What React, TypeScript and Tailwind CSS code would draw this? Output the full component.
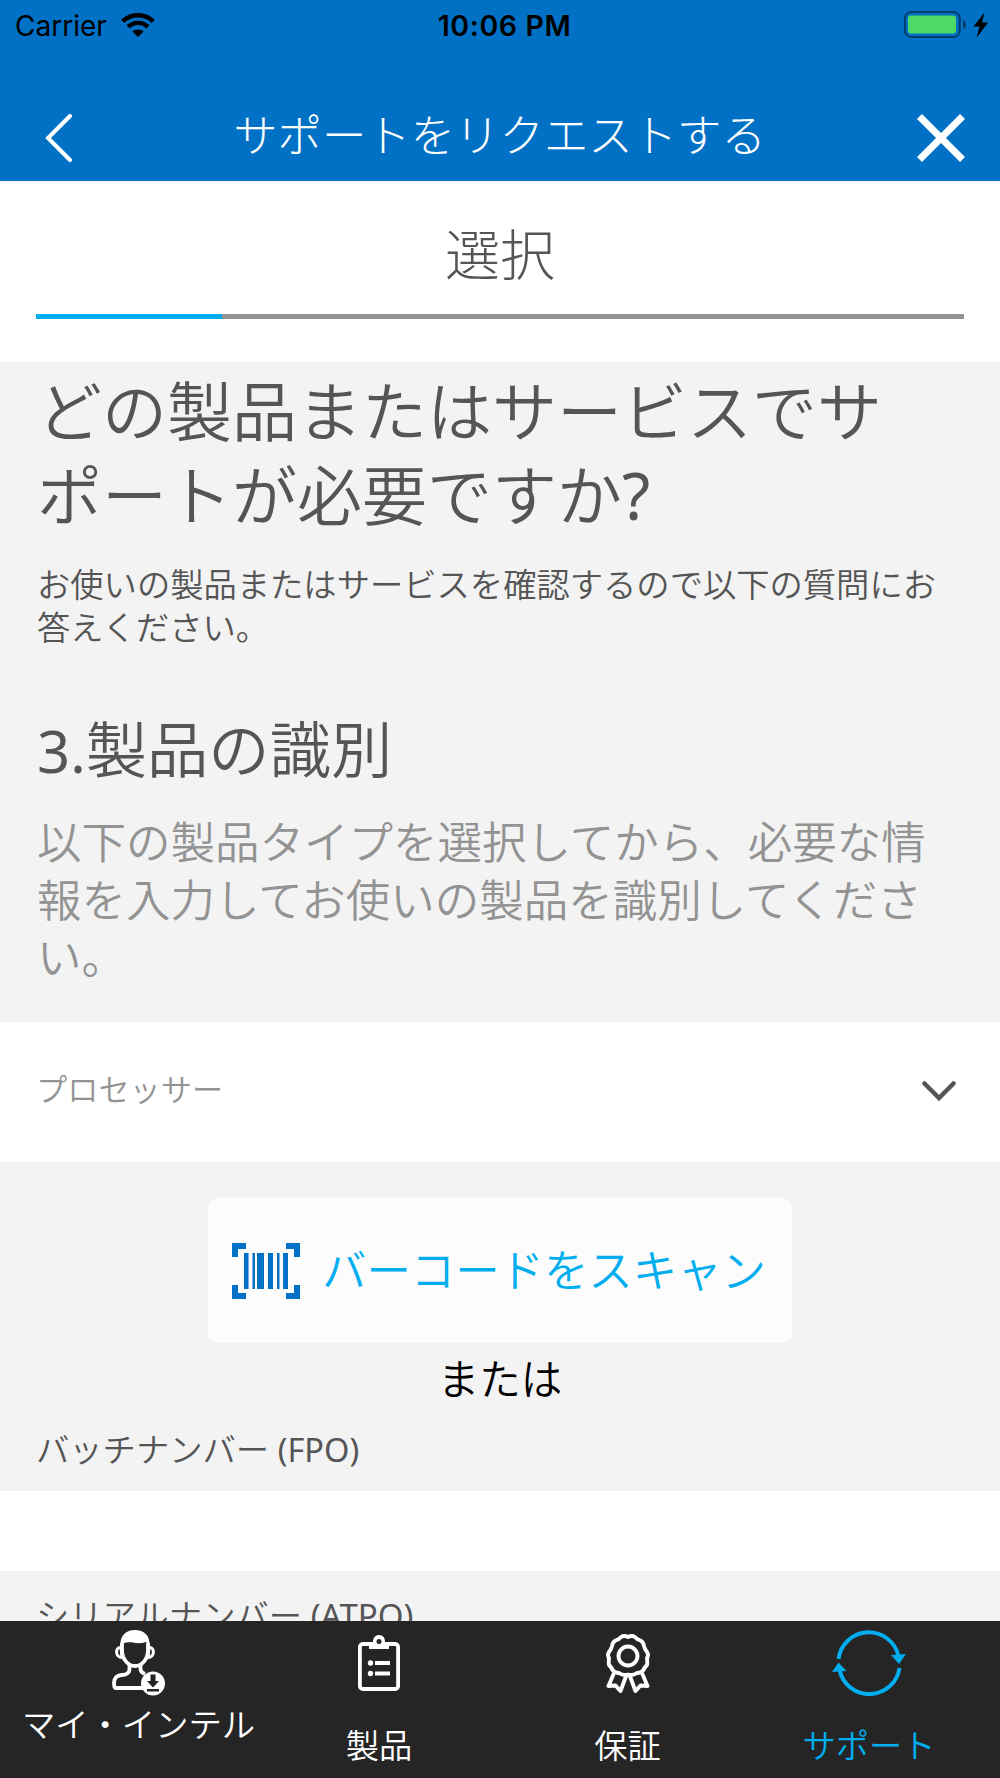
import type { ReactNode } from "react";

function WifiIcon() {
    return (
        <svg className="w-[34px] h-[24px] mb-[2px]" viewBox="0 0 34 24" fill="#000">
            <path d="M17 0C23.600 0 29.500 2.500 33.800 6.700L30.700 9.900C27.100 6.500 22.300 4.500 17 4.500S6.900 6.500 3.300 9.900L0.200 6.700C4.500 2.500 10.400 0 17 0Z" />
            <path d="M17 7.700C21.500 7.700 25.500 9.400 28.400 12.300L25.300 15.400C23.100 13.300 20.200 12.100 17 12.100S10.900 13.300 8.700 15.400L5.600 12.300C8.500 9.400 12.500 7.700 17 7.700Z" />
            <path d="M17 16.500C19.300 16.500 21.400 17.200 22.600 18.500L17 24L11.400 18.500C12.600 17.200 14.700 16.500 17 16.500Z" />
        </svg>
    );
}

function BatteryIcon() {
    return (
        <svg className="w-[86px] h-[28px] mb-[2px]" viewBox="0 0 86 28">
            <rect x="0.800" y="1" width="55" height="25" rx="6.500" fill="none" stroke="#000" strokeOpacity="0.450" strokeWidth="2" />
            <rect x="4" y="4.500" width="48" height="18" rx="3" fill="#4cd964" />
            <path d="M59 8.500C63 10.500 63 16.500 59 18.500Z" fill="#000" fillOpacity="0.450" />
            <path d="M80.500 1.500L69.500 15.500H75.500L72.500 27L84 11.500H78Z" fill="#000" />
        </svg>
    );
}

function BarcodeIcon() {
    return (
        <svg className="w-[68px] h-[56px]" viewBox="0 0 68 56" fill="#0071c5">
            <path d="M0 0H14V6H6V14H0ZM54 0H68V14H62V6H54ZM0 42H6V50H14V56H0ZM62 42H68V56H54V50H62Z" />
            <path d="M12 10H16.500V46H12ZM20.500 10H23V46H20.500ZM25 10H32V46H25ZM36 10H41V46H36ZM45 10H47.500V46H45ZM51 10H56V46H51Z" />
        </svg>
    );
}

function ProfileIcon() {
    return (
        <svg className="w-[54px] h-[66px]" viewBox="0 0 54 66" fill="none" stroke="#fff" strokeWidth="3.800">
            <path d="M10 13V20C10 29 16 36 23 36S36 29 36 20V13" />
            <path d="M8.200 16C8.200 5 14 0 23 0S37.800 5 37.800 16L34 12C30 13.500 25 13.500 21 12.500C17 12 14 12.500 12 13Z" fill="#fff" stroke="none" />
            <path d="M9 17.500C3 16.500 3 27.500 10 27.500ZM37 17.500C43 16.500 43 27.500 36 27.500Z" strokeWidth="3" />
            <path d="M17.500 35V39C17.500 43 14 45 10 45C5 45 2 48 2 53C2 56 2.500 58 3.500 58H34M28.500 35V39C28.500 42 30.500 43 33 44" />
            <circle cx="41" cy="53.500" r="12" fill="#fff" stroke="none" />
            <path d="M38.500 44.500H43.500V51H47L41 57.500L35 51H38.500ZM35 59H47V61.500H35Z" fill="#252525" stroke="none" />
        </svg>
    );
}

function ProductIcon() {
    return (
        <svg className="w-[42px] h-[56px]" viewBox="0 0 42 56" fill="none" stroke="#fff" strokeWidth="3.800">
            <rect x="1.900" y="9" width="38.200" height="45" rx="3" />
            <path d="M11 7H15C15 3 17 0 21 0S27 3 27 7H31V14H11Z" fill="#fff" stroke="none" />
            <circle cx="21" cy="6.500" r="2.500" fill="#252525" stroke="none" />
            <path d="M17 28H32M17 38.500H32" strokeWidth="4" />
            <circle cx="12.500" cy="28" r="2.700" fill="#fff" stroke="none" />
            <circle cx="12.500" cy="38.500" r="2.700" fill="#fff" stroke="none" />
        </svg>
    );
}

function WarrantyIcon() {
    return (
        <svg className="w-[44px] h-[59px]" viewBox="0 0 44 59" fill="none" stroke="#fff" strokeWidth="3.900" strokeLinejoin="round">
            <path d="M22 3Q26 1 29 3Q31 5.500 34.500 6.500Q37.500 8 38 12Q38.500 15 41 18Q43 21 41 24Q41.500 28 41 31Q38 34 37.500 36Q35 39 31 39Q27 42 22 40.500Q17 42 13 39Q9 39 6.500 36Q6 34 3 31Q2.500 28 3 24Q1 21 3 18Q5.500 15 6 12Q6.500 8 9.500 6.500Q13 5.500 15 3Q18 1 22 3Z" />
            <circle cx="22" cy="22" r="9.500" />
            <path d="M8 39L2.500 52L9.500 51.500L14.500 57L20.500 41M36 39L41.500 52L34.500 51.500L29.500 57L23.500 41" />
        </svg>
    );
}

function SupportIcon() {
    return (
        <svg className="w-[74px] h-[66px]" viewBox="0 0 74 66" fill="none" stroke="#00aeef" strokeWidth="4">
            <path d="M6.500 29A30.500 30.500 0 0 1 66.500 26M67.500 38A30.500 30.500 0 0 1 7.500 40" />
            <path d="M59 25L74 24L67 34ZM0 42L6.500 32.500L14.500 41Z" fill="#00aeef" stroke="none" />
        </svg>
    );
}

function Tab({ label, icon, className }: { label: string; icon: ReactNode; className: string }) {
    return (
        <button className={`flex flex-col items-center whitespace-nowrap text-[33.300px] leading-[40px] font-[350] ${className}`}>
            {icon}
            <span>{label}</span>
        </button>
    );
}

export default function App() {
    return (
        <div className="w-[1000px] h-[1778px] overflow-hidden flex flex-col bg-[#f3f3f3] text-[#555] font-[350] font-['Noto_Sans','Noto_Sans_CJK_JP',sans-serif]">
            {/* Header */}
            <header className="h-[181px] shrink-0 bg-[#0071c5]">
                <div className="h-[51px] grid grid-cols-3 items-center pl-[15px] pr-[10px] text-black font-normal font-['Inter',sans-serif] text-[28px]">
                    <div className="flex items-center gap-[14px]">
                        <span>Carrier</span>
                        <WifiIcon />
                    </div>
                    <span className="pl-[4px] pt-[1px] text-center text-[28.500px] tracking-[0.600px] font-semibold">10:06 PM</span>
                    <div className="flex justify-end">
                        <BatteryIcon />
                    </div>
                </div>
                <div className="h-[130px] flex items-center justify-between pl-[45px] pr-[35px] pt-[44px] text-white">
                    <svg className="w-[28px] h-[48px]" viewBox="0 0 28 48" fill="none" stroke="#fff" strokeWidth="4" strokeLinecap="round">
                        <path d="M25 2L3 24L25 46" />
                    </svg>
                    <h1 className="pl-[9px] pb-[7px] text-[44.400px] leading-[60px] font-light">サポートをリクエストする</h1>
                    <svg className="w-[48px] h-[48px]" viewBox="0 0 48 48" fill="none" stroke="#fff" strokeWidth="7">
                        <path d="M2.500 2.500L45.500 45.500M45.500 2.500L2.500 45.500" />
                    </svg>
                </div>
            </header>

            {/* Step progress */}
            <section className="h-[181px] shrink-0 bg-white px-[36px] pt-[38px]">
                <h2 className="text-center text-[55px] leading-[70px] font-light">選択</h2>
                <div className="mt-[25px] h-[5px] bg-[#939393]">
                    <div className="h-full w-1/5 bg-[#00aeef]" />
                </div>
            </section>

            <section className="h-[660px] shrink-0 px-[37px] whitespace-nowrap">
                <h2 className="pt-[7px] text-[65px] leading-[84px]">
                    どの製品またはサービスでサ<br />ポートが必要ですか<span className="font-normal">?</span>
                </h2>
                <p className="mt-[26px] text-[33.300px] leading-[43px]">
                    お使いの製品またはサービスを確認するので以下の質問にお<br />答えください。
                </p>
                <h3 className="mt-[59px] h-[80px] text-[61.300px] leading-[82px]"><span className="text-[58px] font-normal">3.</span>製品の識別</h3>
                <p className="mt-[25px] text-[44.500px] leading-[57.500px] text-[#939393]">
                    以下の製品タイプを選択してから、必要な情<br />報を入力してお使いの製品を識別してくださ<br />い。
                </p>
            </section>

            {/* Product type */}
            <button className="h-[140px] shrink-0 bg-white flex items-center justify-between pl-[36px] pr-[44px] text-[31.200px] text-[#939393]">
                <span className="pb-[5px]">プロセッサー</span>
                <svg className="w-[34px] h-[20px] mb-[2px]" viewBox="0 0 34 20" fill="none" stroke="#555" strokeWidth="4.500" strokeLinecap="round">
                    <path d="M2.500 2.500L17 17L31.500 2.500" />
                </svg>
            </button>

            <section className="grow min-h-0 flex flex-col pt-[36px]">
                <button className="self-center w-[584px] h-[145px] shrink-0 rounded-[10px] bg-[#fcfcfc] flex items-center gap-[22px] pl-[24px] text-[#00aeef] text-[44.400px]">
                    <BarcodeIcon />
                    <span className="whitespace-nowrap">バーコードをスキャン</span>
                </button>
                <p className="mt-[8px] text-center text-[41.500px] leading-[56px] text-black">または</p>
                <label className="mt-[20px] h-[44px] shrink-0 px-[36px] text-[33.300px] leading-[44px]">
                    バッチナンバー <span className="text-[32.500px] font-normal">(FPO)</span>
                </label>
                <div className="mt-[20px] h-[80px] shrink-0 bg-white" />
                <label className="mt-[22px] h-[44px] shrink-0 px-[36px] text-[33.300px] leading-[44px]">
                    シリアルナンバー <span className="text-[33px] font-normal">(ATPO)</span>
                </label>
            </section>

            {/* Tab bar */}
            <nav className="relative h-[157px] shrink-0 bg-[#252525] text-white flex">
                <Tab label="マイ・インテル" icon={<ProfileIcon />} className="w-[277px] pt-[9px] gap-[8px]" />
                <Tab label="製品" icon={<ProductIcon />} className="w-[204px] pt-[14px] gap-[34px]" />
                <Tab label="保証" icon={<WarrantyIcon />} className="w-[293px] pt-[13px] gap-[32px]" />
                <Tab label="サポート" icon={<SupportIcon />} className="w-[190px] pt-[9px] gap-[29px] text-[#00aeef]" />
            </nav>
        </div>
    );
}
